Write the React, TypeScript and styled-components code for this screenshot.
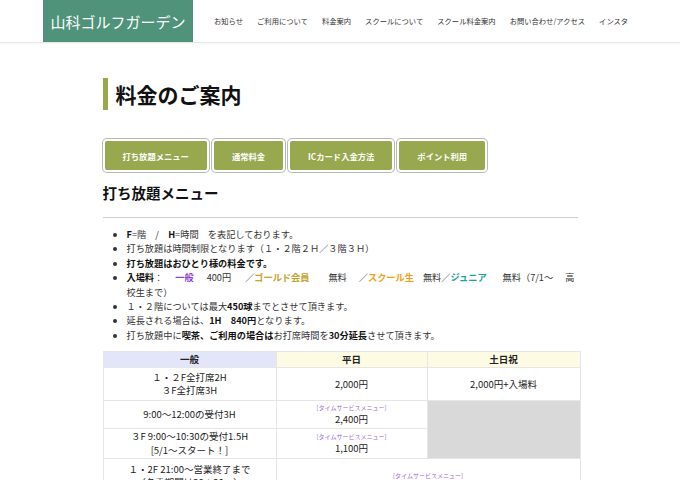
import React from 'react'
import styled, { createGlobalStyle } from 'styled-components'

const GlobalStyle = createGlobalStyle`
  body {
    margin: 0;
    background: #fff;
    color: #333;
    font-family: "Noto Sans CJK JP", "Noto Sans", sans-serif;
  }
`

const Header = styled.header`
  height: 42px;
  border-bottom: 1px solid #e6e6e6;
  box-shadow: 0 1px 2px rgba(0, 0, 0, 0.04);
`

const HeaderInner = styled.div`
  width: 594px;
  margin: 0 auto;
  display: flex;
  align-items: center;
  height: 100%;
`

const Logo = styled.div`
  width: 150px;
  height: 42px;
  background: #4f937b;
  color: #fff;
  font-size: 15px;
  white-space: nowrap;
  display: flex;
  align-items: center;
  justify-content: center;
`

const Nav = styled.nav`
  display: flex;
  gap: 14px;
  margin-left: 21px;
  font-size: 7.3px;
  color: #333;
  white-space: nowrap;
`

const Main = styled.main`
  width: 475px;
  margin: 0 auto;
  padding-top: 35px;
`

const PageTitle = styled.h1`
  margin: 0 0 29px;
  border-left: 5px solid #98a84e;
  padding-left: 8px;
  height: 32px;
  line-height: 32px;
  font-size: 21px;
  font-weight: bold;
  color: #111;
`

const TabRow = styled.div`
  display: flex;
  gap: 3px;
`

const TabButton = styled.div`
  height: 33px;
  box-sizing: border-box;
  padding: 0 18px;
  background: #98a84e;
  border: 2px solid #fff;
  box-shadow: 0 0 0 1px #b8b8b8;
  border-radius: 4px;
  color: #fff;
  font-size: 8.3px;
  font-weight: bold;
  display: flex;
  align-items: center;
  justify-content: center;
`

const SectionTitle = styled.h2`
  margin: 11px 0 0;
  padding-bottom: 14px;
  border-bottom: 1px solid #cfcfcf;
  font-size: 14.5px;
  line-height: 20px;
  font-weight: bold;
  color: #111;
`

const InfoList = styled.ul`
  margin: 9px 0 0;
  padding-left: 24px;
  font-size: 9.2px;
  line-height: 14.4px;
  color: #333;

  b {
    color: #111;
  }
`

const Tag = styled.b<{ $color: string }>`
  && {
    color: ${p => p.$color};
  }
`

const Gap = styled.span<{ $w: number }>`
  display: inline-block;
  width: ${p => p.$w}px;
`

const PriceTable = styled.table`
  margin-top: 9px;
  width: 100%;
  border-collapse: collapse;
  table-layout: fixed;
  font-size: 9.5px;
  color: #222;
  text-align: center;
`

const HeadCell = styled.th<{ $bg: string; $w: number }>`
  width: ${p => p.$w}px;
  height: 15px;
  padding: 0;
  line-height: 15px;
  background: ${p => p.$bg};
  border: 1px solid #e6e6e6;
  font-weight: bold;
`

const Row = styled.tr<{ $h: number }>`
  height: ${p => p.$h}px;
`

const Cell = styled.td<{ $gray?: boolean; $padBottom?: number }>`
  border: 1px solid #e6e6e6;
  padding: 1px 4px ${p => p.$padBottom ?? 1}px;
  line-height: 13.5px;
  background: ${p => (p.$gray ? '#d9d9d9' : '#fff')};
  vertical-align: middle;
`

const ServiceLabel = styled.div`
  font-size: 6px;
  line-height: 10px;
  color: #9b6ad0;
`

const navItems = ['お知らせ', 'ご利用について', '料金案内', 'スクールについて', 'スクール料金案内', 'お問い合わせ/アクセス', 'インスタ']
const tabs = ['打ち放題メニュー', '通常料金', 'ICカード入金方法', 'ポイント利用']

export default function App() {
  return (
    <>
      <GlobalStyle />
      <Header>
        <HeaderInner>
          <Logo>山科ゴルフガーデン</Logo>
          <Nav>
            {navItems.map(item => (
              <span key={item}>{item}</span>
            ))}
          </Nav>
        </HeaderInner>
      </Header>

      <Main>
        <PageTitle>料金のご案内</PageTitle>

        <TabRow>
          {tabs.map(t => (
            <TabButton key={t}>{t}</TabButton>
          ))}
        </TabRow>

        <SectionTitle>打ち放題メニュー</SectionTitle>

        <InfoList>
          <li><b>F</b>=階　/　<b>H</b>=時間　を表記しております。</li>
          <li>打ち放題は時間制限となります（１・２階２Ｈ／３階３Ｈ）</li>
          <li><b>打ち放題はおひとり様の料金です。</b></li>
          <li>
            <b>入場料</b>：<Gap $w={12} /><Tag $color="#8d3fe0">一般</Tag><Gap $w={13} />400円<Gap $w={14} />／<Tag $color="#c9a02c">ゴールド会員</Tag><Gap $w={19} />無料<Gap $w={12} />／<Tag $color="#f0a010">スクール生</Tag><Gap $w={9} />無料／<Tag $color="#1aa39a">ジュニア</Tag><Gap $w={16} />無料（7/1〜<Gap $w={12} />高校生まで）
          </li>
          <li>１・２階については最大<b>450球</b>までとさせて頂きます。</li>
          <li>延長される場合は、<b>1H　840円</b>となります。</li>
          <li>打ち放題中に<b>喫茶、ご利用の場合は</b>お打席時間を<b>30分延長</b>させて頂きます。</li>
        </InfoList>

        <PriceTable>
          <thead>
            <tr>
              <HeadCell $bg="#e3e6f8" $w={172}>一般</HeadCell>
              <HeadCell $bg="#fdfbe4" $w={150}>平日</HeadCell>
              <HeadCell $bg="#fdfbe4" $w={152}>土日祝</HeadCell>
            </tr>
          </thead>
          <tbody>
            <Row $h={33}>
              <Cell>１・２F全打席2H<br />３F全打席3H</Cell>
              <Cell>2,000円</Cell>
              <Cell>2,000円+入場料</Cell>
            </Row>
            <Row $h={28}>
              <Cell>9:00〜12:00の受付3H</Cell>
              <Cell>
                <ServiceLabel>[タイムサービスメニュー]</ServiceLabel>
                2,400円
              </Cell>
              <Cell $gray rowSpan={2} />
            </Row>
            <Row $h={29}>
              <Cell>３F 9:00〜10:30の受付1.5H<br />[5/1〜スタート！]</Cell>
              <Cell>
                <ServiceLabel>[タイムサービスメニュー]</ServiceLabel>
                1,100円
              </Cell>
            </Row>
            <Row $h={48}>
              <Cell $padBottom={14}>１・2F 21:00〜営業終了まで<br />（冬季期間は20：30〜）</Cell>
              <Cell colSpan={2}>
                <ServiceLabel>[タイムサービスメニュー]</ServiceLabel>
                1,500円
              </Cell>
            </Row>
          </tbody>
        </PriceTable>
      </Main>
    </>
  )
}
